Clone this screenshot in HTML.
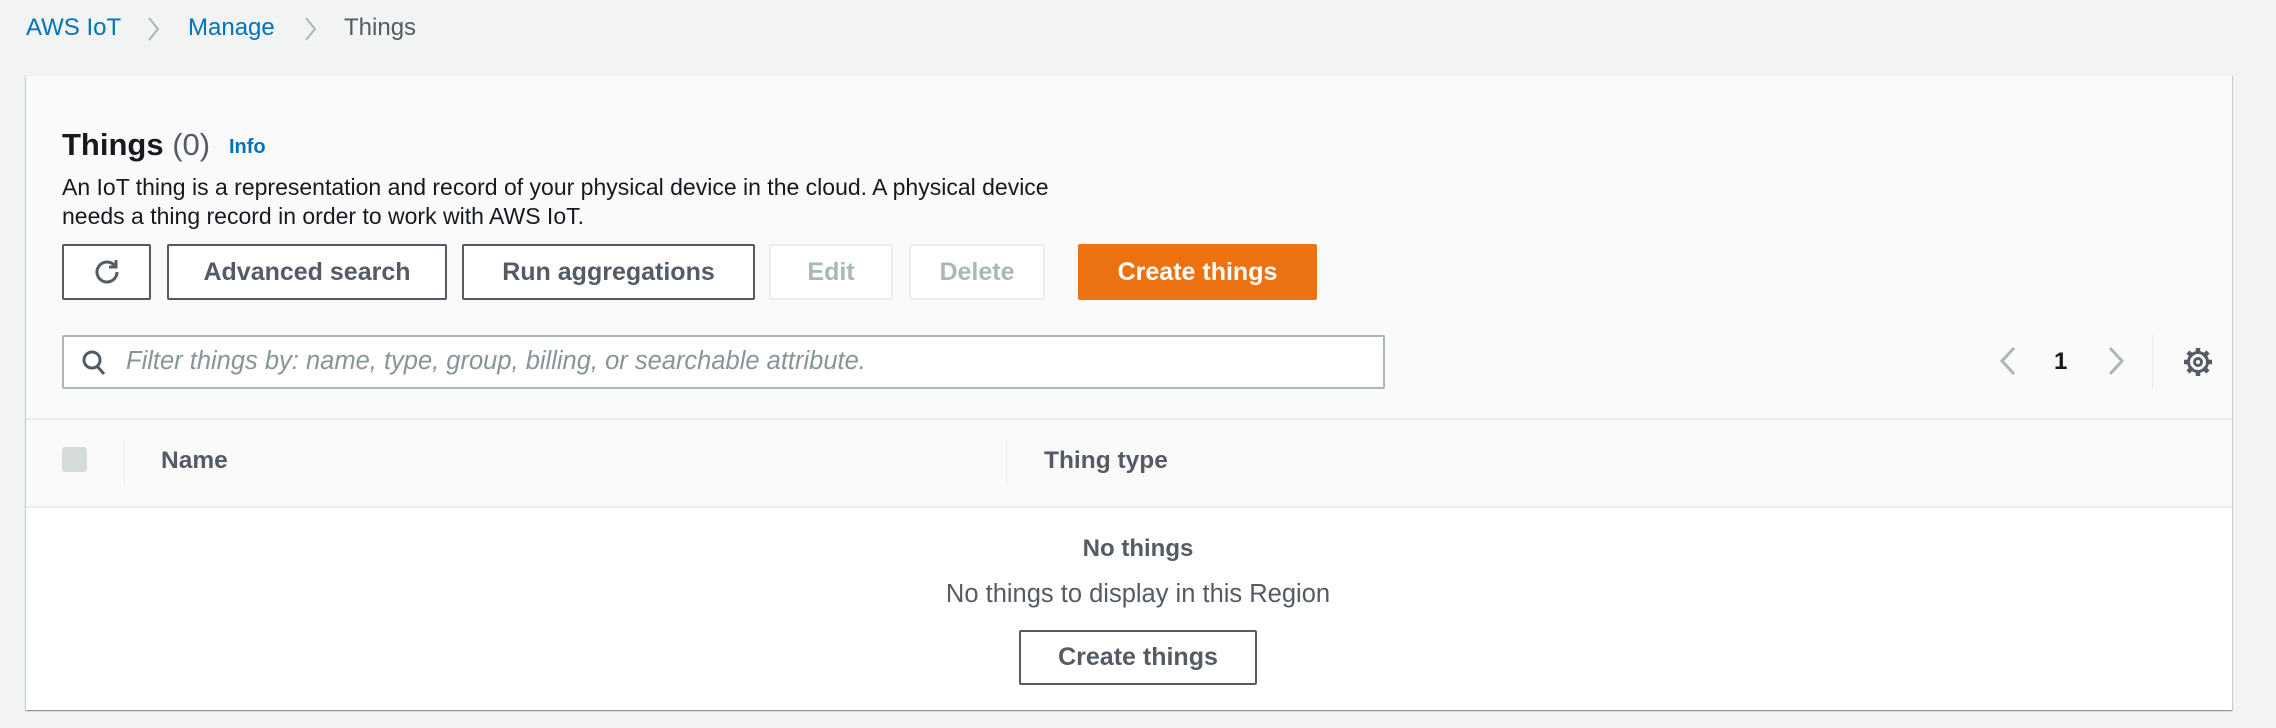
<!DOCTYPE html>
<html><head><meta charset="utf-8"><style>
*{box-sizing:border-box;margin:0;padding:0}
body{width:2276px;height:728px;background:#f2f3f3;font-family:"Liberation Sans",sans-serif;color:#16191f;position:relative;overflow:hidden}
.a{position:absolute;white-space:nowrap}
.bc{font-size:24px;top:14px}
.card{position:absolute;left:26px;top:75px;width:2206px;height:635px;background:#fafafa;box-shadow:0 1px 1px rgba(0,28,36,.3),1px 1px 1px rgba(0,28,36,.15),-1px 1px 1px rgba(0,28,36,.15);border-top:1px solid #eaeded}
.btn{position:absolute;top:244px;height:56px;border:2px solid #545b64;border-radius:2px;background:#fff;font-weight:bold;font-size:25px;color:#545b64;display:flex;align-items:center;justify-content:center}
.dis{border:2px solid #eaeded;color:#aab7b8}
</style></head><body>
<div class="a bc" style="left:26px;color:#0073bb">AWS IoT</div>
<svg class="a" style="left:146px;top:16px" width="16" height="26"><path d="M3 2l9 11-9 11" stroke="#aab7b8" stroke-width="2" fill="none"/></svg>
<div class="a bc" style="left:188px;color:#0073bb">Manage</div>
<svg class="a" style="left:303px;top:16px" width="16" height="26"><path d="M3 2l9 11-9 11" stroke="#aab7b8" stroke-width="2" fill="none"/></svg>
<div class="a bc" style="left:344px;color:#545b64">Things</div>

<div class="card">
 <div style="position:absolute;left:0;right:0;top:430px;bottom:0;background:#fff;border-top:2px solid #eaeded"></div>
 <div style="position:absolute;left:0;right:0;top:342px;border-top:2px solid #eaeded"></div>
</div>
<div class="a" style="left:62px;top:127px;font-size:31px;font-weight:bold">Things <span style="font-weight:normal;color:#545b64">(0)</span></div>
<div class="a" style="left:229px;top:136px;font-size:20px;font-weight:bold;color:#0073bb">Info</div>
<div class="a" style="left:62px;top:173px;font-size:23px;line-height:29px;color:#16191f">An IoT thing is a representation and record of your physical device in the cloud. A physical device<br>needs a thing record in order to work with AWS IoT.</div>

<div class="btn" style="left:62px;width:89px"><svg width="30" height="30" viewBox="0 0 30 30"><path d="M23 9A10 10 0 1 0 25 15" stroke="#545b64" stroke-width="3" fill="none"/><path d="M24 3v7h-7" stroke="#545b64" stroke-width="3" fill="none"/></svg></div>
<div class="btn" style="left:167px;width:280px">Advanced search</div>
<div class="btn" style="left:462px;width:293px">Run aggregations</div>
<div class="btn dis" style="left:769px;width:124px">Edit</div>
<div class="btn dis" style="left:909px;width:136px">Delete</div>
<div class="btn" style="left:1078px;width:239px;background:#ec7211;border-color:#ec7211;color:#fff">Create things</div>

<div class="a" style="left:62px;top:335px;width:1323px;height:54px;border:2px solid #aab7b8;border-radius:2px;background:#fff"></div>
<svg class="a" style="left:80px;top:349px" width="28" height="28"><circle cx="12" cy="11" r="8" stroke="#545b64" stroke-width="3" fill="none"/><path d="M17 17l7 8" stroke="#545b64" stroke-width="3"/></svg>
<div class="a" style="left:126px;top:347px;font-size:25.5px;font-style:italic;color:#879596">Filter things by: name, type, group, billing, or searchable attribute.</div>

<svg class="a" style="left:1998px;top:346px" width="20" height="30"><path d="M16 2L4 15l12 13" stroke="#aab7b8" stroke-width="3" fill="none"/></svg>
<div class="a" style="left:2054px;top:348px;font-size:24px;font-weight:bold">1</div>
<svg class="a" style="left:2106px;top:346px" width="20" height="30"><path d="M4 2l12 13L4 28" stroke="#aab7b8" stroke-width="3" fill="none"/></svg>
<div class="a" style="left:2152px;top:335px;width:1px;height:53px;background:#eaeded"></div>
<svg class="a" style="left:2183px;top:347px" width="30" height="30" viewBox="0 0 30 30"><g stroke="#545b64" stroke-width="4.5"><path d="M15 1v6M15 23v6M1 15h6M23 15h6M5 5l4.5 4.5M20.5 20.5L25 25M25 5l-4.5 4.5M9.5 20.5L5 25"/></g><circle cx="15" cy="15" r="9.5" fill="none" stroke="#545b64" stroke-width="3"/><circle cx="15" cy="15" r="3.5" fill="none" stroke="#545b64" stroke-width="3"/></svg>

<div class="a" style="left:62px;top:447px;width:25px;height:25px;background:#d5dbdb;border-radius:3px"></div>
<div class="a" style="left:124px;top:440px;width:1px;height:44px;background:#eaeded"></div>
<div class="a" style="left:161px;top:447px;font-size:24.5px;font-weight:bold;color:#545b64">Name</div>
<div class="a" style="left:1006px;top:440px;width:1px;height:44px;background:#eaeded"></div>
<div class="a" style="left:1044px;top:447px;font-size:24.5px;font-weight:bold;color:#545b64">Thing type</div>

<div class="a" style="left:1138px;transform:translateX(-50%);top:535px;font-size:24px;font-weight:bold;color:#545b64">No things</div>
<div class="a" style="left:1138px;transform:translateX(-50%);top:580px;font-size:25.5px;color:#545b64">No things to display in this Region</div>
<div class="btn" style="left:1019px;top:630px;width:238px;height:55px">Create things</div>
</body></html>
